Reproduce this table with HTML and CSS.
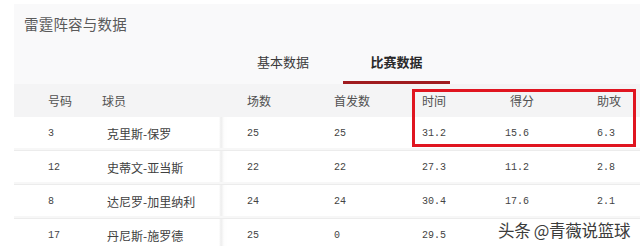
FILE: index.html
```html
<!DOCTYPE html>
<html lang="zh">
<head>
<meta charset="utf-8">
<link rel="stylesheet" href="styles.css">
</head>
<body>
<div class="panel">
  <div class="title">雷霆阵容与数据</div>
  <div class="tabs">
    <div class="tab">基本数据</div>
    <div class="tab active">比赛数据</div>
  </div>
  <div class="table">
    <div class="row head">
      <div>号码</div><div class="h-player">球员</div><div>场数</div><div>首发数</div><div>时间</div><div class="h-score">得分</div><div>助攻</div>
    </div>
    <div class="row">
      <div class="num">3</div><div>克里斯-保罗</div><div class="num">25</div><div class="num">25</div><div class="num">31.2</div><div class="num">15.6</div><div class="num">6.3</div>
    </div>
    <div class="row">
      <div class="num">12</div><div>史蒂文-亚当斯</div><div class="num">22</div><div class="num">22</div><div class="num">27.3</div><div class="num">11.2</div><div class="num">2.8</div>
    </div>
    <div class="row">
      <div class="num">8</div><div>达尼罗-加里纳利</div><div class="num">24</div><div class="num">24</div><div class="num">30.4</div><div class="num">17.6</div><div class="num">2.1</div>
    </div>
    <div class="row">
      <div class="num">17</div><div>丹尼斯-施罗德</div><div class="num">25</div><div class="num">0</div><div class="num">29.5</div><div class="num"></div><div class="num"></div>
    </div>
    <div class="highlight"></div>
    <div class="watermark">头条 @青薇说篮球</div>
  </div>
</div>
</body>
</html>
```
FILE: styles.css
```css
html, body {
  margin: 0;
  padding: 0;
  background: #ffffff;
  overflow: hidden;
}
body {
  width: 640px;
  height: 246px;
  font-family: "Noto Sans CJK SC", "Microsoft YaHei", sans-serif;
}
.panel {
  margin: 4px 0 0 14px;
  background: #f9f9fa;
  height: 242px;
  overflow: hidden;
}
.title {
  padding: 11px 0 0 10px;
  height: 30px;
  font-size: 14.5px;
  line-height: 18px;
  color: #5a5a5a;
  letter-spacing: 0.2px;
}
.tabs {
  display: flex;
  padding-left: 243px;
  height: 39px;
}
.tab {
  font-size: 13px;
  line-height: 18px;
  color: #3a3a3a;
  padding-top: 8px;
  margin-right: 34px;
  box-sizing: border-box;
  height: 39px;
}
.tab.active {
  font-weight: bold;
  color: #2a2a2a;
  margin-right: 0;
  width: 107px;
  text-align: center;
  border-bottom: 3px solid #a01b1f;
}
.table {
  position: relative;
}
.row {
  display: grid;
  grid-template-columns: 59px 140px 87px 88px 83px 92px 1fr;
  padding-left: 34px;
  height: 33px;
  align-items: center;
  font-size: 12px;
  color: #404040;
  background: linear-gradient(90deg, #fff 0 205px, #ededed 207px, #fdfdfd 210px, #fff 214px);
  border-bottom: 1px solid #ececec;
  box-shadow: inset 0 -2px 0 #f7f7f7;
}
.row.head {
  background: #f4f4f5;
  color: #505050;
  border-bottom: none;
  box-shadow: none;
}
.h-player { margin-left: -5px; }
.h-score { margin-left: 5px; }
.num {
  font-family: "Liberation Mono", monospace;
  font-size: 10px;
  color: #444;
}
.highlight {
  position: absolute;
  left: 398px;
  top: 5px;
  width: 224px;
  height: 58px;
  border: 3px solid #e01520;
  box-sizing: border-box;
}
.watermark {
  position: absolute;
  left: 484px;
  top: 136px;
  font-size: 16.5px;
  line-height: 20px;
  color: #3c3c3c;
  text-shadow: 0 0 2px #fff, 0 0 2px #fff, 1px 1px 0 #fff, -1px -1px 0 #fff;
  letter-spacing: -0.3px;
}
```
